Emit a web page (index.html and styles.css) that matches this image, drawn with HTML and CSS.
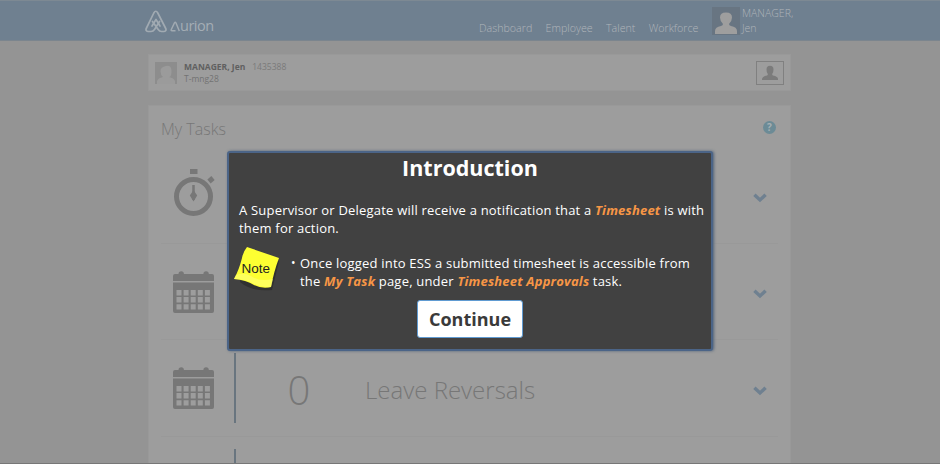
FILE: index.html
```html
<!DOCTYPE html>
<html lang="en">
<head>
<meta charset="utf-8">
<title>Aurion - My Tasks</title>
<link rel="stylesheet" href="styles.css">
</head>
<body>
<svg class="defs" aria-hidden="true">
  <symbol id="calendar" viewBox="0 0 42 43">
    <path fill="#777" d="M2 4h3.500a2.700 2.700 0 0 1 5.400 0h19.500a2.700 2.700 0 0 1 5.400 0H39a2 2 0 0 1 2 2v5H0V6a2 2 0 0 1 2-2zM0 12.500h41V41a2 2 0 0 1-2 2H2a2 2 0 0 1-2-2z"/>
    <path fill="none" stroke="#9d9d9d" stroke-width="5.400" stroke-dasharray="5 2.100" d="M3.500 22.700h34M3.500 29.800h34M3.500 36.900h34"/>
  </symbol>
  <symbol id="chevron" viewBox="0 0 14 10"><path fill="none" stroke="#6f8090" stroke-width="3.400" d="M1.400 1.800 7 7l5.600-5.200"/></symbol>
</svg>
<header class="topbar">
  <div class="bar">
    <div class="brand">
      <svg width="23" height="23" viewBox="0 0 23 23"><g fill="none" stroke="#a1aab2" stroke-width="1.700" stroke-linejoin="round" stroke-linecap="round"><path d="M14.500 11.500 9.500 19.500q-1.300 2-3.500 2H3q-3-.5-1.500-3.500L8.800 3q2-3.500 4 0l7.700 15q1.500 3-1.500 3.500h-2.500q-2 0-3.300-2L7.500 11.500"/><path d="m7 16 4-6.500 4 6.500"/></g></svg>
      <span class="brand-name"><svg width="10" height="11" viewBox="0 0 10 11"><path fill="none" stroke="#a1aab2" stroke-width="1.500" stroke-linejoin="round" d="M5.500 9.800H2Q.7 9.800 1.300 8.500L4.500 1.800Q5.200.7 5.900 1.800L9.300 10"/></svg>urion</span>
    </div>
    <nav class="nav"><a>Dashboard</a><a>Employee</a><a>Talent</a><a>Workforce</a></nav>
    <svg class="avatar" width="28" height="28" viewBox="0 0 28 28"><path fill="#687582" d="M0 0h28v28H0z"/><path fill="#9e9e9e" d="M3 27v-3q0-4 6-5 2-.6 2-2-3-3-3-6.500 0-5 6-5t6 5q0 3.500-3 6.500 0 1.400 2 2 6 1 6 5v3z"/></svg>
    <div class="user">MANAGER,<br>Jen</div>
  </div>
</header>
<main class="wrap">
  <section class="profile">
    <svg width="22" height="22" viewBox="0 0 22 22"><path fill="#8d8d8d" d="M0 0h22v22H0z"/><path fill="#9b9b9b" d="M2 22v-3q1-3 6-4-2.500-2-2.500-6T11 4t5.500 5-2.500 6q5 1 6 4v3z"/></svg>
    <div class="person"><p><b>MANAGER, Jen</b><span class="number">1435388</span></p><p>T-mng28</p></div>
    <div class="card-btn"><svg width="16" height="16" viewBox="0 0 16 16"><path fill="#7b7b7b" d="M0 15v-1q0-2.500 5-3.500 1-.5.800-1.500Q4.500 7.500 4.500 4.500 4.500.8 8 .8t3.500 3.700Q11.500 7.500 10.200 9q-.2 1 .8 1.500 5 1 5 3.500v1z"/></svg></div>
  </section>
  <section class="tasks">
    <div class="tasks-head"><h2>My Tasks</h2><span class="help">?</span></div>
    <div class="row">
      <svg class="icon" width="42" height="50" viewBox="0 0 42 50"><g fill="none" stroke="#777"><circle cx="20.500" cy="29.500" r="17" stroke-width="5"/><path stroke-width="5" d="M17 4.500h7.500"/><path stroke-width="2.500" d="M20.500 18v15"/><path stroke-width="5" d="m36 14.500 4-3.500"/></g><path fill="#777" d="m20.500 23 3.700 5.500-3.700 6-3.700-6z"/></svg>
      <i class="rule"></i><svg class="chev"><use href="#chevron"/></svg>
    </div>
    <div class="row">
      <svg class="icon cal"><use href="#calendar"/></svg>
      <i class="rule"></i><svg class="chev"><use href="#chevron"/></svg>
    </div>
    <div class="row">
      <svg class="icon cal"><use href="#calendar"/></svg>
      <i class="rule"></i><span class="count">0</span><span class="name">Leave Reversals</span><svg class="chev"><use href="#chevron"/></svg>
    </div>
    <div class="row"><span class="icon"></span><i class="rule"></i></div>
  </section>
</main>
<div class="dialog" role="dialog">
  <h1>Introduction</h1>
  <p class="intro">A Supervisor or Delegate will receive a notification that a <em>Timesheet</em> is with<br>them for action.</p>
  <div class="note">
    <svg class="sticky" width="50" height="48" viewBox="0 0 50 48"><path fill="#252525" opacity=".6" d="m17 5 29 10-7 29q-20 2-32-8z"/><path fill="#fdff32" d="m14 1 32 11q-5 13-8 29-9 2-17-2-8-5-20-6 5-9 8-21 1-6 5-11z"/><path fill="#ffff85" opacity=".5" d="M1 33q11 0 20 5 8 4 17 3l2-8q-14 3-22-3-7-4-15-1z"/><text x="8.500" y="26.500" class="sticky-text">Note</text></svg>
    <span class="bullet">•</span>
    <p>Once logged into ESS a submitted timesheet is accessible from<br>the <em>My Task</em> page, under <em>Timesheet Approvals</em> task.</p>
  </div>
  <button>Continue</button>
</div>
</body>
</html>
```
FILE: styles.css
```css
* { box-sizing: border-box; }
body { margin: 0; height: 464px; overflow: hidden; position: relative; display: flex; flex-direction: column; background: #949494; font-family: "Open Sans", sans-serif; border-bottom: 1px solid #777; }
.defs { position: absolute; width: 0; height: 0; }
p, h1, h2 { margin: 0; }
.wrap { display: flex; flex-direction: column; flex: 1; min-height: 0; width: 643px; margin-left: 148px; }
.topbar { flex: none; height: 41px; background: #6f8090; border-top: 1px solid #7d8993; border-bottom: 1px solid #7b858e; }
.bar { display: flex; height: 39px; margin-left: 145px; width: 661px; }
.brand { display: flex; width: 334px; padding-top: 9px; gap: 2px; }
.brand-name { display: flex; align-items: flex-end; height: 24px; line-height: 16px; font-size: 14.500px; font-weight: 500; letter-spacing: -.5px; color: #a4adb5; }
.brand-name svg { margin-bottom: 2px; }
.nav { display: flex; gap: 13.300px; width: 233px; padding-top: 19px; font-size: 10.700px; font-weight: 300; line-height: 16px; color: #b0b5ba; white-space: nowrap; }
.avatar { margin-top: 6px; flex: none; }
.user { padding: 5px 0 0 2px; font-size: 10.500px; font-weight: 300; line-height: 15px; color: #b0b5ba; }
.profile { display: flex; flex: none; height: 37px; margin-top: 13px; padding: 7px 6px 0; background: #9d9d9d; border: 1px solid #999; }
.person { margin-left: 7px; margin-top: -1px; flex: 1; font-size: 8.500px; line-height: 12px; color: #737373; }
.person b { color: #606060; }
.number { margin-left: 7px; color: #7a7a7a; }
.card-btn { display: flex; align-items: center; justify-content: center; width: 28px; height: 24px; margin-top: -1px; border: 1px solid #808080; }
.tasks { flex: 1; min-height: 0; overflow: hidden; margin-top: 14px; background: #9d9d9d; border: 1px solid #999; border-bottom: 0; }
.tasks-head { display: flex; justify-content: space-between; height: 41px; padding: 10px 14px 0 12px; }
h2 { font-size: 16px; line-height: 26px; font-weight: 300; color: #777; }
.help { width: 13px; height: 13px; margin-top: 5px; border-radius: 50%; background: #6c8b96; color: #a5b0b4; font-size: 10px; line-height: 13px; font-weight: 700; text-align: center; }
.row { display: flex; align-items: center; height: 96.500px; margin: 0 12px; border-bottom: 1px solid #999; }
.icon { width: 42px; margin-left: 12px; flex: none; }
.row .icon:not(.cal) { position: relative; top: -3px; }
.cal { height: 43px; }
.rule { width: 2px; height: 70px; margin-left: 19px; background: #69757f; }
.count { width: 64px; margin-left: 31px; padding-top: 4px; text-align: center; font-size: 40px; font-weight: 300; color: #777; }
.name { margin-left: 34px; padding-top: 3px; font-size: 24px; font-weight: 300; color: #777; }
.chev { width: 14px; height: 10px; margin: 6px 11px 0 auto; }
.dialog { position: absolute; left: 227px; top: 151px; width: 486px; height: 200px; padding: 0 5px; background: #414141; border: 2px solid #4b6487; border-radius: 3px; box-shadow: 1px 0 3px #51637b; color: #fff; text-align: center; }
h1 { font-size: 21.500px; line-height: 30px; font-weight: 700; }
.intro, .note p { text-align: left; font-size: 13px; line-height: 18px; white-space: nowrap; letter-spacing: .2px; }
.intro { padding: 18px 0 0 5px; }
em { color: #f79646; font-weight: 700; }
.note { display: flex; height: 48px; margin-top: 9px; }
.sticky { flex: none; margin-left: -1px; }
.sticky-text { font: 13.500px "Liberation Sans", sans-serif; fill: #222; }
.bullet { width: 9px; margin-left: 8px; padding-top: 8px; font-size: 12px; line-height: 18px; text-align: left; }
.note p { padding-top: 8px; }
button { display: block; width: 106px; height: 38px; margin: 6px auto 0; padding: 0; border: 1px solid #609bd2; border-radius: 3px; background: #fff; color: #3a3a3a; font: 700 18px "Open Sans", sans-serif; }
```
